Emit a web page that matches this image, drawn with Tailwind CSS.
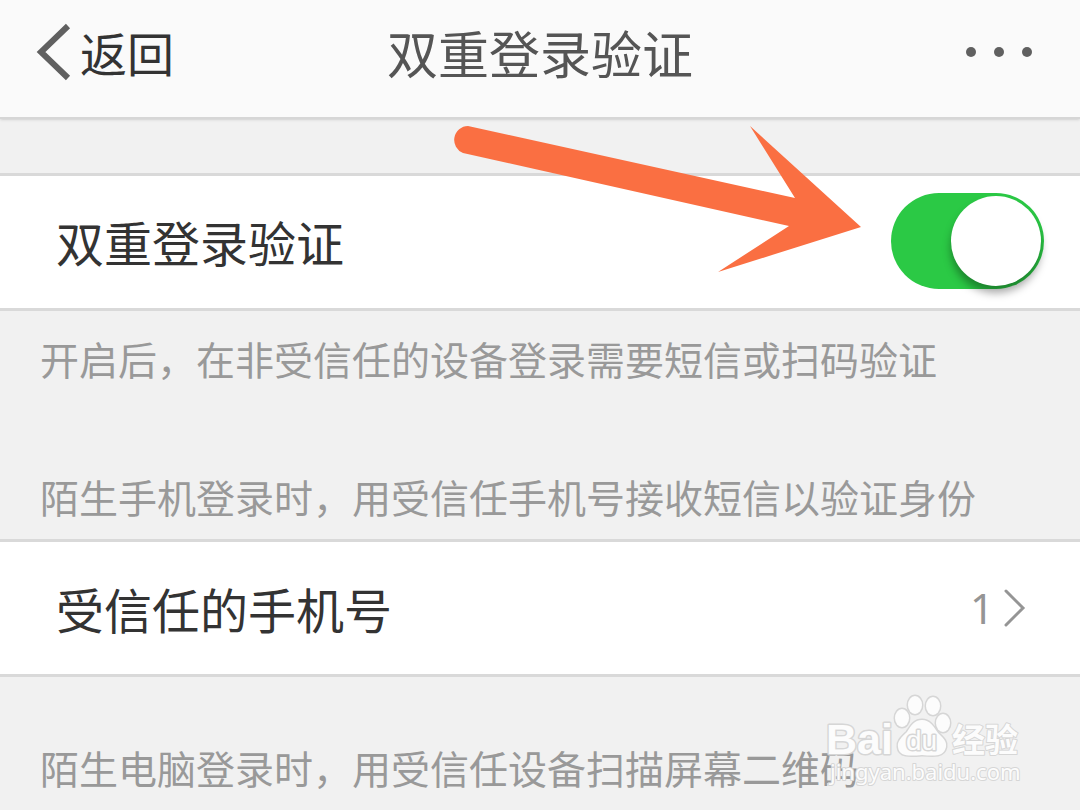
<!DOCTYPE html>
<html lang="zh-CN">
<head>
    <meta charset="UTF-8">
    <meta name="viewport" content="width=device-width, initial-scale=1.0">
    <title>双重登录验证</title>
    <script src="https://cdn.jsdelivr.net/npm/@tailwindcss/browser@4"></script>
    <style>
        body {
            font-family: 'Noto Sans CJK SC', sans-serif;
        }
    </style>
</head>
<body class="bg-[#f1f1f1]">
    <div class="relative min-h-screen overflow-hidden">
        <!-- Top bar -->
        <header class="grid grid-cols-[1fr_auto_1fr] items-center h-[119px] pb-[14px] px-9 bg-[#fafafa] border-b-2 border-[#d6d6d6] shadow-sm">
            <a href="#" class="flex items-center gap-2 text-[47px] leading-[60px] text-[#333]">
                <svg class="w-9 h-15" viewBox="0 0 36 60" fill="none" stroke="#606060" stroke-width="6" aria-hidden="true">
                    <path d="M32 4L5 30L32 56"/>
                </svg>
                返回
            </a>
            <h1 class="text-[51px] leading-[60px] text-[#555]">双重登录验证</h1>
            <button type="button" aria-label="更多" class="justify-self-end mr-[11px]">
                <svg class="w-[68px] h-3" viewBox="0 0 68 12" fill="#606060">
                    <circle cx="6" cy="6" r="5"/>
                    <circle cx="34" cy="6" r="5"/>
                    <circle cx="62" cy="6" r="5"/>
                </svg>
            </button>
        </header>

        <main>
            <section class="mt-[54px]">
                <div class="flex items-center justify-between h-[138px] pb-[2px] pl-14 pr-9 bg-white border-y-3 border-[#d9d9d9]">
                    <label for="doubleCheck" class="text-[48px] leading-[60px] text-[#333]">双重登录验证</label>
                    <input type="checkbox" id="doubleCheck" checked class="appearance-none w-[153px] h-24 p-[3px] rounded-full bg-gray-300 checked:bg-[#2bc945] before:block before:w-[90px] before:h-[90px] before:rounded-full before:bg-white before:shadow-[0_7px_8px_rgba(0,0,0,0.35)] checked:before:ml-auto">
                </div>
                <p class="px-10 pt-[17px] text-[39px] leading-[60px] text-[#999]">开启后，在非受信任的设备登录需要短信或扫码验证</p>
            </section>

            <section class="mt-[78px]">
                <p class="px-10 pb-[13px] text-[39px] leading-[60px] text-[#999]">陌生手机登录时，用受信任手机号接收短信以验证身份</p>
                <a href="#" class="flex items-center justify-between h-[138px] pl-14 pr-[54px] bg-white border-y-3 border-[#d9d9d9]">
                    <span class="text-[48px] leading-[60px] text-[#333]">受信任的手机号</span>
                    <span class="flex items-center gap-2 text-[42px] leading-[60px] text-[#959595] font-['Noto_Sans']">
                        1
                        <svg class="w-6 h-10" viewBox="0 0 24 40" fill="none" stroke="#959595" stroke-width="3" stroke-linecap="round" aria-hidden="true">
                            <path d="M4 3L21 20L4 37"/>
                        </svg>
                    </span>
                </a>
            </section>

            <section class="mt-[60px]">
                <p class="px-10 text-[39px] leading-[60px] text-[#999]">陌生电脑登录时，用受信任设备扫描屏幕二维码</p>
            </section>
        </main>

        <!-- Arrow pointing to the switch -->
        <svg class="absolute top-[120px] right-[216px] w-[412px] h-[156px]" viewBox="0 0 412 156" fill="#fa6f42" aria-hidden="true">
            <path d="M16 6L343 78L298 6L409 107L266 152L337 106L11 33A14 14 0 0 1 16 6Z"/>
        </svg>

        <!-- Watermark -->
        <svg class="absolute top-[690px] right-[50px] w-[210px] h-[105px]" viewBox="0 0 210 105" fill="#fcfcfc" stroke="#d6d6d6" stroke-width="3" stroke-linejoin="round" paint-order="stroke" aria-label="Baidu 经验">
            <text x="6" y="64" font-family="Liberation Sans" font-weight="700" font-size="43">Bai</text>
            <ellipse cx="82" cy="28" rx="7" ry="9"/>
            <ellipse cx="95" cy="15" rx="7" ry="9"/>
            <ellipse cx="113" cy="16" rx="7" ry="9"/>
            <ellipse cx="123" cy="33" rx="7" ry="9"/>
            <path d="M102 30C110 30 114 37 118 43C123 48 127 51 126 57C124 67 114 66 102 65C90 66 79 67 78 57C77 51 82 47 87 42C91 36 94 30 102 30Z"/>
            <text x="86" y="60" font-family="Liberation Sans" font-size="28">du</text>
            <text x="132" y="62" font-family="Noto Sans CJK SC" font-weight="700" font-size="33" stroke-width="2">经验</text>
            <text x="10" y="90" font-family="Noto Sans" font-size="22" stroke-width="2">jingyan.baidu.com</text>
        </svg>
    </div>
</body>
</html>
